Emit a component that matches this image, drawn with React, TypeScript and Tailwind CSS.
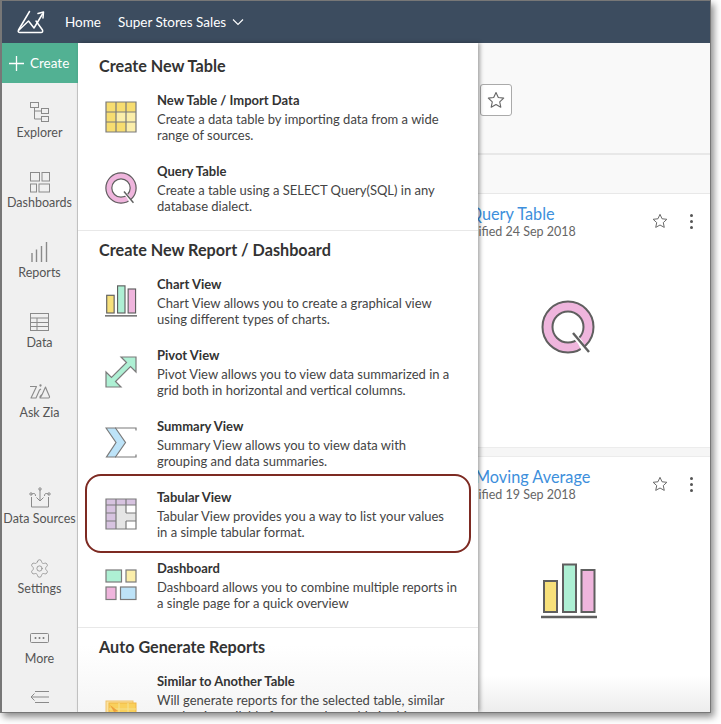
import { Settings } from "lucide-react";

const line = "#7a7a7a";

function TableIcon() {
  return (
    <svg width="32" height="32" viewBox="0 0 32 32">
      <rect x="1" y="1" width="30" height="30" fill="#fbeeaa" />
      <path d="M1 1h30v10H21v20H1z" fill="#f7dd70" />
      <path d="M11 11h10v10H11z" fill="#fbeeaa" />
      <path d="M1 1h30v30H1zM11 1v30M21 1v30M1 11h30M1 21h30" fill="none" stroke={line} strokeWidth="1.2" />
    </svg>
  );
}

function QueryIcon({ size = 32 }: { size?: number }) {
  return (
    <svg width={size} height={size} viewBox="0 0 54 54">
      <circle cx="27" cy="27" r="20.5" fill="none" stroke="#efb5dd" strokeWidth="11" />
      <circle cx="27" cy="27" r="25.5" fill="none" stroke="#5f5f5f" strokeWidth="2" />
      <circle cx="27" cy="27" r="15.5" fill="#fff" stroke="#5f5f5f" strokeWidth="2" />
      <path d="M31 33l8 9 4 8" fill="none" stroke="#fff" strokeWidth="5" />
      <path d="M32 33l16 19" fill="none" stroke="#5f5f5f" strokeWidth="2.4" />
    </svg>
  );
}

function ChartIcon({ size = 32 }: { size?: number }) {
  return (
    <svg width={size} height={size} viewBox="0 0 56 56">
      <rect x="3" y="18" width="13" height="31" fill="#f7e07a" stroke="#5f5f5f" strokeWidth="2" />
      <rect x="22" y="1.500" width="13" height="47.500" fill="#aef0d4" stroke="#5f5f5f" strokeWidth="2" />
      <rect x="40.500" y="7" width="13" height="42" fill="#efb5dd" stroke="#5f5f5f" strokeWidth="2" />
      <path d="M0 54h56" stroke="#5f5f5f" strokeWidth="2.400" />
    </svg>
  );
}

function PivotIcon() {
  return (
    <svg width="32" height="32" viewBox="0 0 32 32">
      <path d="M31 1v15l-5.500-5.500-15 15L16 31H1V16l5.500 5.500 15-15L16 1z" fill="#aef0d4" stroke={line} strokeWidth="1.200" />
    </svg>
  );
}

function SigmaIcon() {
  return (
    <svg width="32" height="32" viewBox="0 0 32 32">
      <path d="M1 1h9.500l10 14.500-10 14.500H1.500L11 15.500z" fill="#bde3f8" stroke={line} strokeWidth="1.200" />
      <path d="M10 1h21v2.500M10 30h21v-2.500" fill="none" stroke={line} strokeWidth="1.200" />
    </svg>
  );
}

function TabularIcon() {
  return (
    <svg width="32" height="32" viewBox="0 0 32 32">
      <rect x="1" y="1" width="30" height="30" fill="#fff" />
      <path d="M1 1h30v6H11v24H1z" fill="#d7c3e0" />
      <path d="M11 7h10v8h10v8H21v8H11z" fill="#e5e5e5" />
      <path d="M1 1h30v30H1zM11 1v30M21 1v14M21 23v8M1 7h30M1 15h10M21 15h10M1 23h10M21 23h10" fill="none" stroke={line} strokeWidth="1.200" />
    </svg>
  );
}

function DashboardIcon() {
  return (
    <svg width="32" height="32" viewBox="0 0 32 32">
      <rect x="1" y="1" width="15.500" height="12" fill="#aef0d4" stroke={line} strokeWidth="1.200" />
      <rect x="21" y="1" width="10" height="12" fill="#fbeeaa" stroke={line} strokeWidth="1.200" />
      <rect x="1" y="18" width="10" height="12.500" fill="#efb5dd" stroke={line} strokeWidth="1.200" />
      <rect x="15.500" y="18" width="15.500" height="12.500" fill="#bde3f8" stroke={line} strokeWidth="1.200" />
    </svg>
  );
}

function SimilarIcon() {
  return (
    <svg width="32" height="32" viewBox="0 0 32 32">
      <rect x="1" y="1" width="27" height="30" fill="#fbe3a0" stroke="#f0c26a" strokeWidth="1" />
      <rect x="4" y="3" width="27" height="28" fill="#f9d05c" stroke="#efb544" strokeWidth="1" />
      <path d="M4 9h27M14 3v12M23 3v12" stroke="#f4e08e" strokeWidth="1.200" />
      <path d="M5 5l8 6-4 1z" fill="#ee9f3c" />
    </svg>
  );
}

const sideStroke = { fill: "none", stroke: "#8a8a8a", strokeWidth: 1 };

function ExplorerIcon() {
  return (
    <svg width="22" height="22" viewBox="0 0 22 22" {...sideStroke}>
      <rect x="1.500" y="1.500" width="8" height="5" />
      <rect x="12.500" y="7.500" width="7" height="5" />
      <rect x="12.500" y="15.500" width="7" height="5" />
      <path d="M5.500 6.500v11.500h7M5.500 10h7" />
    </svg>
  );
}

function DashboardsIcon() {
  return (
    <svg width="22" height="22" viewBox="0 0 22 22" {...sideStroke}>
      <rect x="1.500" y="1.500" width="9" height="8.500" />
      <rect x="13" y="1.500" width="7.500" height="8.500" />
      <rect x="1.500" y="13" width="6" height="8" />
      <rect x="10" y="13" width="10.500" height="8" />
    </svg>
  );
}

function ReportsIcon() {
  return (
    <svg width="22" height="22" viewBox="0 0 22 22" {...sideStroke} strokeWidth="1.400">
      <path d="M3 12v9M7.500 8.500V21M12.500 5v16M17.500 1v20" />
    </svg>
  );
}

function DataIcon() {
  return (
    <svg width="22" height="22" viewBox="0 0 22 22" {...sideStroke}>
      <rect x="1.500" y="2.500" width="18" height="17" />
      <path d="M1.500 7h18M1.500 11.500h18M1.500 15.500h18M8 7v12.500" />
    </svg>
  );
}

function ZiaIcon() {
  return (
    <svg width="22" height="22" viewBox="0 0 22 22" {...sideStroke} strokeWidth="1.100" strokeLinejoin="round">
      <path d="M1 5.500h6.500L2 17h5l3.500-8 1.500-1M10.500 17c2-.5 3.500-6 6-11 1 3 3 7 4 9.500.3 1-.5 1.500-1.500 1.500h-7c-1 0-1.500-1-.5-2l2-2" />
      <circle cx="11.500" cy="4.500" r=".6" />
    </svg>
  );
}

function DataSourcesIcon() {
  return (
    <svg width="22" height="22" viewBox="0 0 22 22" {...sideStroke}>
      <path d="M2.500 10v10h17V10M11 2.500V14M7.500 10.500L11 14l3.500-3.500M2.500 7.500c0-1 1.500-1 2.500-1s1.500 1 1.500 2.500M19.500 7.500c0-1-1.500-1-2.500-1s-1.500 1-1.500 2.500" />
      <circle cx="11" cy="2" r="1.200" />
      <circle cx="2" cy="7" r="1.200" />
      <circle cx="20" cy="7" r="1.200" />
    </svg>
  );
}

function MoreIcon() {
  return (
    <svg width="22" height="12" viewBox="0 0 22 12">
      <rect x="1.500" y="1.500" width="18" height="9" rx="1" fill="none" stroke="#8a8a8a" />
      <circle cx="6.500" cy="6" r="1" fill="#777" />
      <circle cx="10.500" cy="6" r="1" fill="#777" />
      <circle cx="14.500" cy="6" r="1" fill="#777" />
    </svg>
  );
}

function CollapseIcon() {
  return (
    <svg width="20" height="14" viewBox="0 0 20 14" {...sideStroke}>
      <path d="M5 1.500h14M1 7h18M5 12.500h14M4.500 3.500L1 7l3.500 3.500" />
    </svg>
  );
}

function Logo() {
  return (
    <svg width="28" height="24" viewBox="0 0 28 24" fill="none" stroke="#fff" strokeWidth="1.500" strokeLinejoin="round" strokeLinecap="round">
      <path d="M12.500 1.500L1.500 20c-.8 1.500 0 2.500 1.500 2.500h21c1.500 0 2-1 1.500-2.500L19 11" />
      <path d="M2 20l9.500-9 5.500 7L25.500 4" />
      <path d="M21 3.500l5.500-1.500-.5 6" />
    </svg>
  );
}

function StarIcon({ size = 18 }: { size?: number }) {
  return (
    <svg width={size} height={size} viewBox="0 0 18 18" fill="none" stroke="#666" strokeWidth="1.100" strokeLinejoin="round">
      <path d="M9 1.500l2.300 5 5.400.6-4 3.700 1.100 5.400L9 13.500l-4.800 2.700 1.100-5.400-4-3.700 5.400-.6z" />
    </svg>
  );
}

function Dots() {
  return (
    <div className="flex flex-col gap-[3px]">
      <span className="w-[3px] h-[3px] rounded-full bg-[#555]" />
      <span className="w-[3px] h-[3px] rounded-full bg-[#555]" />
      <span className="w-[3px] h-[3px] rounded-full bg-[#555]" />
    </div>
  );
}

function SideItem({ icon, label }: { icon: React.ReactNode; label: string }) {
  return (
    <div className="h-[70px] flex flex-col items-center">
      <div className="h-[22px] mt-[18px] flex items-center justify-center">{icon}</div>
      <span className="mt-[2px] text-[12.5px] leading-[16px] text-[#555] whitespace-nowrap">{label}</span>
    </div>
  );
}

function MenuRow({ icon, title, desc, iconTop = "mt-[10px]" }: { icon: React.ReactNode; title: string; desc: string[]; iconTop?: string }) {
  return (
    <div className="flex h-[52px]">
      <div className={`w-[32px] shrink-0 ${iconTop}`}>{icon}</div>
      <div className="ml-[20px]">
        <div className="text-[13px] leading-[18px] font-bold text-[#333]">{title}</div>
        <div className="mt-[2px] text-[13px] leading-[16px] text-[#444] whitespace-nowrap">
          {desc.map((d) => (
            <div key={d}>{d}</div>
          ))}
        </div>
      </div>
    </div>
  );
}

function Card({ title, titlePad, date, icon, top, last }: { title: string; titlePad: string; date: string; icon: React.ReactNode; top: string; last?: boolean }) {
  return (
    <div className={`bg-white pl-[27px] ${last ? "flex-1" : "h-[253px]"}`}>
      <div className="flex pt-[10px] items-start">
        <div className="w-[199px]">
          <div className={`text-[16.3px] leading-[20px] text-[#3d8fdc] whitespace-nowrap ${titlePad}`}>{title}</div>
          <div className="text-[12.5px] leading-[16px] text-[#666] whitespace-nowrap">{date}</div>
        </div>
        <div className="mt-[9px]"><StarIcon size={16} /></div>
        <div className="ml-[22px] mt-[10px]"><Dots /></div>
      </div>
      <div className={`flex pl-[88px] ${top}`}>{icon}</div>
    </div>
  );
}

export default function App() {
  return (
    <div className="w-[721px] h-[724px] bg-white font-['Lato',sans-serif] overflow-hidden">
      <div className="w-[711px] h-[713px] flex flex-col border-t border-l-2 border-r border-b border-[#777] shadow-[3px_4px_7px_rgba(0,0,0,0.45)] overflow-hidden">
        <header className="h-[42px] shrink-0 bg-[#3c4c5f] flex items-center text-white">
          <div className="ml-[15px] w-[28px]"><Logo /></div>
          <span className="ml-[20px] text-[13.5px]">Home</span>
          <span className="ml-[17px] text-[13.5px]">Super Stores Sales</span>
          <svg className="ml-[6px]" width="12" height="8" viewBox="0 0 12 8" fill="none" stroke="#fff" strokeWidth="1.100">
            <path d="M1 1.500l5 5 5-5" />
          </svg>
        </header>
        <div className="flex-1 flex min-h-0">
          <aside className="w-[76px] shrink-0 bg-[#f0f0f0] border-r border-[#c9c9c9] flex flex-col">
            <div className="h-[40px] bg-[#52b193] flex items-center text-white -mr-px relative">
              <svg className="ml-[6px]" width="17" height="17" viewBox="0 0 17 17" stroke="#fff" strokeWidth="1.300">
                <path d="M8.500 1v15M1 8.500h15" />
              </svg>
              <span className="ml-[5px] text-[13.5px]">Create</span>
            </div>
            <SideItem icon={<ExplorerIcon />} label="Explorer" />
            <SideItem icon={<DashboardsIcon />} label="Dashboards" />
            <SideItem icon={<ReportsIcon />} label="Reports" />
            <SideItem icon={<DataIcon />} label="Data" />
            <SideItem icon={<ZiaIcon />} label="Ask Zia" />
            <div className="h-[36px]" />
            <SideItem icon={<DataSourcesIcon />} label="Data Sources" />
            <SideItem icon={<Settings size={21} strokeWidth={0.9} color="#8a8a8a" />} label="Settings" />
            <SideItem icon={<MoreIcon />} label="More" />
            <div className="flex justify-center mt-[11px]"><CollapseIcon /></div>
          </aside>
          <main className="relative flex-1 min-w-0 bg-[#f9f9f9] flex flex-col">
            <div className="h-[112px] shrink-0 border-b-2 border-[#e8e8e8] flex justify-end items-start pr-[198px]">
              <div className="mt-[41px] w-[32px] h-[32px] rounded-[3px] border border-[#aaa] bg-white flex items-center justify-center">
                <StarIcon />
              </div>
            </div>
            <div className="h-[39px] shrink-0 border-b border-[#e8e8e8]" />
            <div className="flex-1 pl-[348px] flex flex-col min-h-0">
              <Card title="Query Table" titlePad="pl-[16px]" date="Modified 24 Sep 2018" icon={<QueryIcon size={54} />} top="mt-[60px]" />
              <div className="h-[10px] shrink-0 bg-[#f6f6f6] border-y border-[#ececec]" />
              <Card title="Moving Average" titlePad="pl-[22px]" date="Modified 19 Sep 2018" icon={<ChartIcon size={56} />} top="mt-[60px]" last />
            </div>
            <div className="absolute left-0 right-0 bottom-0 h-[36px] bg-gradient-to-b from-transparent to-[#ededed] pointer-events-none" />

            <div className="absolute left-0 top-0 bottom-0 w-[400px] bg-gradient-to-b from-white from-90% to-[#f5f5f5] shadow-[2px_0_4px_rgba(0,0,0,0.35)] overflow-hidden text-[#333]">
              <section className="pt-[12px] pb-[16px] pl-[21px] pr-[27px] border-b border-[#e8e8e8]">
                <h2 className="text-[16.2px] leading-[22px] font-bold">Create New Table</h2>
                <div className="mt-[14px] flex flex-col gap-[19px] pl-[6px]">
                  <MenuRow icon={<TableIcon />} title="New Table / Import Data" desc={["Create a data table by importing data from a wide", "range of sources."]} />
                  <MenuRow icon={<QueryIcon />} title="Query Table" desc={["Create a table using a SELECT Query(SQL) in any", "database dialect."]} />
                </div>
              </section>
              <section className="pt-[8px] pb-[16px] pl-[21px] pr-[27px] border-b border-[#e8e8e8]">
                <h2 className="text-[16.2px] leading-[22px] font-bold">Create New Report / Dashboard</h2>
                <div className="mt-[14px] flex flex-col gap-[19px] pl-[6px]">
                  <MenuRow icon={<ChartIcon />} title="Chart View" desc={["Chart View allows you to create a graphical view", "using different types of charts."]} />
                  <MenuRow icon={<PivotIcon />} title="Pivot View" desc={["Pivot View allows you to view data summarized in a", "grid both in horizontal and vertical columns."]} />
                  <MenuRow icon={<SigmaIcon />} title="Summary View" desc={["Summary View allows you to view data with", "grouping and data summaries."]} />
                  <MenuRow icon={<TabularIcon />} title="Tabular View" desc={["Tabular View provides you a way to list your values", "in a simple tabular format."]} />
                  <MenuRow icon={<DashboardIcon />} title="Dashboard" desc={["Dashboard allows you to combine multiple reports in", "a single page for a quick overview"]} />
                </div>
              </section>
              <section className="pt-[8px] pl-[21px] pr-[27px]">
                <h2 className="text-[16.2px] leading-[22px] font-bold">Auto Generate Reports</h2>
                <div className="mt-[14px] flex flex-col gap-[19px] pl-[6px]">
                  <MenuRow icon={<SimilarIcon />} iconTop="mt-[28px]" title="Similar to Another Table" desc={["Will generate reports for the selected table, similar", "to what is available from another table in this"]} />
                </div>
              </section>
              <div className="absolute left-[7px] top-[431px] w-[386px] h-[79px] rounded-[16px] border-2 border-[#7d2a22]" />
            </div>
          </main>
        </div>
      </div>
    </div>
  );
}
